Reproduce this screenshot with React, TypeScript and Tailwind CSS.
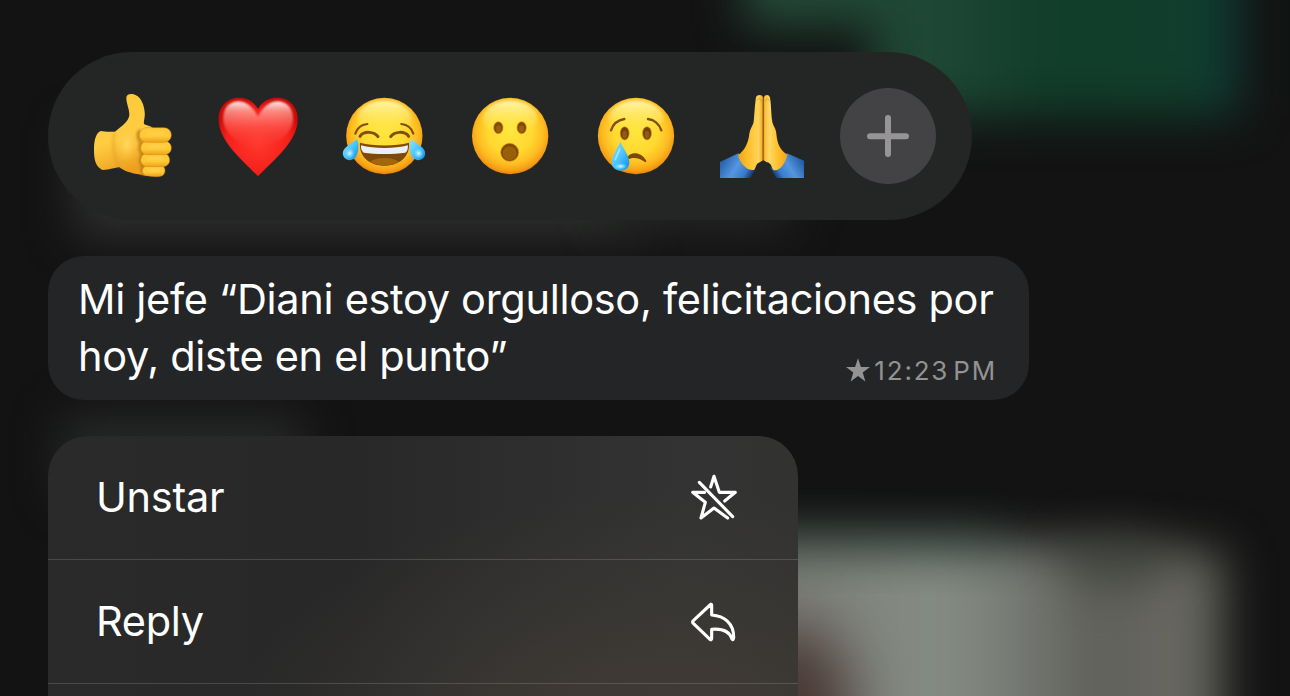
import React from "react";

function Backdrop() {
  return (
    <svg className="absolute inset-0 h-full w-full" viewBox="0 0 1290 696" preserveAspectRatio="none" aria-hidden="true">
      <defs>
        <filter id="soft" x="-50%" y="-100%" width="200%" height="300%" colorInterpolationFilters="sRGB">
          <feGaussianBlur stdDeviation="23" />
        </filter>
        <filter id="softer" x="-50%" y="-100%" width="200%" height="300%" colorInterpolationFilters="sRGB">
          <feGaussianBlur stdDeviation="30" />
        </filter>
        <linearGradient id="green" x1="740" x2="1250" y1="0" y2="0" gradientUnits="userSpaceOnUse">
          <stop offset="0" stopColor="#264c3b" />
          <stop offset="0.42" stopColor="#1d4634" />
          <stop offset="0.6" stopColor="#113d2a" />
          <stop offset="0.85" stopColor="#113e2c" />
          <stop offset="1" stopColor="#0e3a35" />
        </linearGradient>
        <linearGradient id="photo" x1="780" x2="1245" y1="0" y2="0" gradientUnits="userSpaceOnUse">
          <stop offset="0" stopColor="#7c7e77" />
          <stop offset="0.35" stopColor="#858c84" />
          <stop offset="0.5" stopColor="#777b75" />
          <stop offset="0.67" stopColor="#60605b" />
          <stop offset="0.9" stopColor="#6a6962" />
          <stop offset="1" stopColor="#2c3a2e" />
        </linearGradient>
      </defs>
      <rect width="1290" height="696" fill="#131313" />
      <path d="M744 -90H1240V116H872V26H744Z" fill="url(#green)" filter="url(#soft)" />
      <rect x="75" y="130" width="560" height="106" fill="#2e302e" filter="url(#soft)" />
      <rect x="610" y="140" width="180" height="92" fill="#232523" filter="url(#soft)" />
      <rect x="62" y="417" width="240" height="80" fill="#272a28" filter="url(#soft)" />
      <path d="M660 540L1100 544L1226 552V860H660Z" fill="url(#photo)" filter="url(#soft)" />
      <rect x="640" y="525" width="360" height="34" fill="#35584b" opacity="0.35" filter="url(#soft)" />
      <ellipse cx="1115" cy="560" rx="55" ry="30" fill="#393e37" opacity="0.6" filter="url(#soft)" />
      <ellipse cx="790" cy="710" rx="62" ry="85" fill="#463430" opacity="0.95" filter="url(#softer)" />
    </svg>
  );
}

function FaceShading({ id }: { id: string }) {
  return (
    <defs>
      <radialGradient id={id + "-base"} cx="0.5" cy="0.44" r="0.575">
        <stop offset="0" stopColor="#ffe63c" />
        <stop offset="0.5" stopColor="#ffd930" />
        <stop offset="0.75" stopColor="#fdbd22" />
        <stop offset="0.9" stopColor="#f79e14" />
        <stop offset="1" stopColor="#e07a05" />
      </radialGradient>
      <linearGradient id={id + "-shine"} x1="0" x2="0" y1="0" y2="1">
        <stop offset="0" stopColor="#fff8b4" stopOpacity="0.95" />
        <stop offset="1" stopColor="#ffe53b" stopOpacity="0" />
      </linearGradient>
      <linearGradient id={id + "-tear"} x1="0" x2="1" y1="0" y2="1">
        <stop offset="0" stopColor="#8fe3ff" />
        <stop offset="0.5" stopColor="#4cc4fc" />
        <stop offset="1" stopColor="#0a8be8" />
      </linearGradient>
      <radialGradient id={id + "-glow"}>
        <stop offset="0" stopColor="#d8f8ff" />
        <stop offset="1" stopColor="#8ee4ff" stopOpacity="0" />
      </radialGradient>
      <filter id={id + "-blur"} colorInterpolationFilters="sRGB">
        <feGaussianBlur stdDeviation="4" />
      </filter>
    </defs>
  );
}

function Head({ id, cx }: { id: string; cx: number }) {
  return (
    <>
      <FaceShading id={id} />
      <circle cx={cx} cy="168" r="114.5" fill={`url(#${id}-base)`} />
      <ellipse cx={cx} cy="116" rx="82" ry="54" fill={`url(#${id}-shine)`} filter={`url(#${id}-blur)`} />
    </>
  );
}

const emojiClass = "h-[110px] w-[110px] shrink-0";

function ThumbsUp() {
  return (
    <svg className={emojiClass} viewBox="0 0 330 330">
      <defs>
        <linearGradient id="hand" x1="0" x2="0.3" y1="0" y2="1">
          <stop offset="0" stopColor="#ffc936" />
          <stop offset="0.6" stopColor="#ffcc42" />
          <stop offset="1" stopColor="#eda01f" />
        </linearGradient>
        <linearGradient id="finger" x1="0" x2="0" y1="0" y2="1">
          <stop offset="0" stopColor="#ffca38" />
          <stop offset="0.6" stopColor="#ffc935" />
          <stop offset="1" stopColor="#eda31c" />
        </linearGradient>
        <radialGradient id="palm">
          <stop offset="0" stopColor="#ffd864" />
          <stop offset="1" stopColor="#ffcc42" stopOpacity="0" />
        </radialGradient>
        <filter id="handBlur" x="-50%" y="-50%" width="200%" height="200%" colorInterpolationFilters="sRGB">
          <feGaussianBlur stdDeviation="4" />
        </filter>
      </defs>
      <path d="M62 153C75 156 92 155 105 155C124 140 145 126 148 106C149 89 139 71 139 54C139 43 149 40 161 43C181 48 191 70 194 95C196 116 189 125 193 133C199 137 211 138 218 143L230 284C212 290 197 288 183 284C151 280 131 272 117 261C105 264 91 268 67 270C48 260 42 242 42 211C42 179 48 159 62 153Z" fill="url(#hand)" />
      <path d="M104 157C96 187 98 225 118 263" fill="none" stroke="#dd9827" strokeWidth="7" opacity="0.55" filter="url(#handBlur)" />
      <ellipse cx="141" cy="193" rx="35" ry="52" fill="url(#palm)" />
      <path d="M181 151C169 164 177 181 185 188C177 200 181 216 188 222C180 233 180 249 189 257C184 268 186 279 194 284" fill="none" stroke="#ac6b0c" strokeWidth="9" opacity="0.8" filter="url(#handBlur)" />
      <g stroke="#cb8718" strokeWidth="1.5">
        <path d="M202 256H243C257 259 259 279 247 287C234 292 210 290 196 286C182 278 184 263 202 256Z" fill="url(#finger)" />
        <rect x="182" y="220" width="87" height="40" rx="20" fill="url(#finger)" />
        <rect x="182" y="183" width="92" height="41" rx="20" fill="url(#finger)" />
        <rect x="178" y="143" width="96" height="44" rx="22" fill="url(#finger)" />
      </g>
      <path d="M205 161H252M208 199H253M206 235H249M207 270H240" fill="none" stroke="#ffda68" strokeWidth="7" strokeLinecap="round" opacity="0.7" filter="url(#handBlur)" />
    </svg>
  );
}

function Heart() {
  return (
    <svg className={emojiClass} viewBox="0 0 330 330">
      <defs>
        <radialGradient id="heart" cx="0.5" cy="0.56" r="0.56">
          <stop offset="0" stopColor="#ff3a2e" />
          <stop offset="0.7" stopColor="#f5201a" />
          <stop offset="1" stopColor="#cc0a08" />
        </radialGradient>
        <linearGradient id="heartShine" x1="0" x2="0" y1="0" y2="1">
          <stop offset="0" stopColor="#fff3ee" stopOpacity="0.97" />
          <stop offset="0.2" stopColor="#ffaea5" stopOpacity="0.75" />
          <stop offset="0.5" stopColor="#ff655b" stopOpacity="0.6" />
          <stop offset="1" stopColor="#fc342b" stopOpacity="0" />
        </linearGradient>
        <filter id="heartBlur" colorInterpolationFilters="sRGB"><feGaussianBlur stdDeviation="2.5" /></filter>
      </defs>
      <path d="M159 289C110 238 42 184 41 120C40 73 74 52 104 53C132 54 149 69 159 87C169 69 186 54 214 53C246 52 279 74 278 120C277 184 207 239 159 289Z" fill="url(#heart)" />
      <path d="M159 110C145 82 126 64 98 64C67 66 53 91 55 119C57 157 97 192 159 216C224 190 262 157 264 119C266 91 251 66 220 64C192 64 173 82 159 110Z" fill="url(#heartShine)" filter="url(#heartBlur)" />
    </svg>
  );
}

function Joy() {
  return (
    <svg className={emojiClass} viewBox="0 0 330 330">
      <Head id="joy" cx={163} />
      <g fill="none" stroke="#80510b" strokeLinecap="round">
        <path d="M76 161C81 144 94 134 112 132M214 132C232 134 245 144 250 161" strokeWidth="6.5" />
        <path d="M90 169C102 152 132 154 144 170M182 170C194 154 224 152 236 169" strokeWidth="9" />
      </g>
      <path d="M90 188C129 199 198 199 237 188C241 232 205 257 163 257C122 257 86 232 90 188Z" fill="#7f4a03" />
      <path d="M93 196C133 207 194 207 234 196C234 208 231 216 226 218C191 223 135 223 101 218C95 213 92 206 93 196Z" fill="#eceff6" />
      <path d="M120 246C139 230 188 230 207 246C190 259 138 259 120 246Z" fill="#a2670c" />
      <path d="M81 178C89 196 86 222 74 235C62 245 43 241 39 225C35 207 53 197 81 178Z" fill="url(#joy-tear)" />
      <path d="M243 178C235 196 238 222 250 235C262 245 281 241 285 225C289 207 271 197 243 178Z" fill="url(#joy-tear)" />
      <ellipse cx="59" cy="220" rx="15" ry="16" fill="url(#joy-glow)" />
      <ellipse cx="266" cy="220" rx="15" ry="16" fill="url(#joy-glow)" />
    </svg>
  );
}

function Surprised() {
  return (
    <svg className={emojiClass} viewBox="0 0 330 330">
      <Head id="wow" cx={165.5} />
      <g fill="#7e4904" stroke="#dc960d" strokeWidth="2">
        <ellipse cx="130" cy="143" rx="14" ry="18" />
        <ellipse cx="200" cy="143" rx="14" ry="18" />
        <circle cx="164" cy="217" r="27" />
      </g>
      <g fill="#9a6009">
        <ellipse cx="131" cy="147" rx="8" ry="11" />
        <ellipse cx="199" cy="147" rx="8" ry="11" />
        <circle cx="164" cy="220" r="21" />
      </g>
    </svg>
  );
}

function Crying() {
  return (
    <svg className={emojiClass} viewBox="0 0 330 330">
      <Head id="cry" cx={168} />
      <path d="M93 151C99 133 114 120 133 117M204 117C223 119 238 133 244 151" fill="none" stroke="#80500c" strokeWidth="7" strokeLinecap="round" />
      <g fill="#744204" stroke="#dfa11b" strokeWidth="2">
        <ellipse cx="134" cy="160" rx="13.5" ry="20" />
        <ellipse cx="201" cy="160" rx="13.5" ry="20" />
      </g>
      <g fill="#905b0e">
        <ellipse cx="134" cy="164" rx="7" ry="12" />
        <ellipse cx="201" cy="164" rx="7" ry="12" />
      </g>
      <path d="M142 232C153 213 184 216 198 241C201 248 196 248 190 243C175 232 157 232 146 238Z" fill="#794807" />
      <path d="M121 184C128 205 148 226 148 247C148 263 137 272 122 272C106 272 95 262 95 247C95 226 114 205 121 184Z" fill="url(#cry-tear)" />
      <ellipse cx="122" cy="259" rx="20" ry="10" fill="url(#cry-glow)" />
      <path d="M119 207C116 219 108 229 106 239" fill="none" stroke="#baf0ff" strokeWidth="5" strokeLinecap="round" opacity="0.7" />
    </svg>
  );
}

function Praying() {
  return (
    <svg className={emojiClass} viewBox="0 0 330 330">
      <defs>
        <linearGradient id="prayLeft" x1="100" x2="176" y1="0" y2="0" gradientUnits="userSpaceOnUse">
          <stop offset="0" stopColor="#f0a51a" />
          <stop offset="0.4" stopColor="#ffc02c" />
          <stop offset="0.8" stopColor="#ffd458" />
          <stop offset="0.92" stopColor="#f3b434" />
          <stop offset="1" stopColor="#a8660b" />
        </linearGradient>
        <linearGradient id="prayRight" x1="247" x2="175" y1="0" y2="0" gradientUnits="userSpaceOnUse">
          <stop offset="0" stopColor="#f0a51a" />
          <stop offset="0.4" stopColor="#ffc02c" />
          <stop offset="0.75" stopColor="#ffd864" />
          <stop offset="0.94" stopColor="#f9be3c" />
          <stop offset="1" stopColor="#c98213" />
        </linearGradient>
        <linearGradient id="sleeveLeft" x1="60" x2="150" y1="235" y2="290" gradientUnits="userSpaceOnUse">
          <stop offset="0" stopColor="#2a66b3" />
          <stop offset="0.4" stopColor="#5596e0" />
          <stop offset="0.7" stopColor="#3b7cc9" />
          <stop offset="1" stopColor="#06163c" />
        </linearGradient>
        <linearGradient id="sleeveRight" x1="285" x2="198" y1="235" y2="290" gradientUnits="userSpaceOnUse">
          <stop offset="0" stopColor="#2460a8" />
          <stop offset="0.4" stopColor="#5596e0" />
          <stop offset="0.7" stopColor="#3b7cc9" />
          <stop offset="1" stopColor="#06163c" />
        </linearGradient>
      </defs>
      <path d="M45 246L100 220L153 263L137 294H45Z" fill="url(#sleeveLeft)" />
      <path d="M297 242L246 220L195 263L214 294H297Z" fill="url(#sleeveRight)" />
      <path d="M153 52C156 42 174 42 175 54L176 238C175 243 162 247 156 252L148 269C126 277 103 245 99 226C120 210 130 189 133 161C136 144 143 139 146 126C149 97 150 69 153 52Z" fill="url(#prayLeft)" />
      <path d="M176 54C178 42 194 42 195 54C199 73 198 101 202 126C205 139 213 145 214 161C217 191 224 208 247 224C242 248 225 273 208 271C201 269 202 258 195 251C189 246 176 246 175 238Z" fill="url(#prayRight)" />
      <path d="M175 60L174 238" stroke="#a35c0c" strokeWidth="2.5" />
      <path d="M156 61C159 53 168 55 169 65M181 65C182 54 191 54 192 62" fill="none" stroke="#e59c24" strokeWidth="3" />
    </svg>
  );
}

function UnstarIcon() {
  return (
    <svg className="relative -top-0.5 left-0.5 h-[50px] w-[50px]" viewBox="0 0 150 150" fill="none" stroke="#fff" strokeWidth="9.4" strokeLinecap="round" strokeLinejoin="round">
      <path d="M62 48L72 16L88 64H136L104 90" />
      <path d="M44 64H8L46 94L33 141L72 111L113 141" />
      <path d="M28 34L128 137" />
    </svg>
  );
}

function ReplyIcon() {
  return (
    <svg className="relative left-0.5 h-[50px] w-[50px]" viewBox="0 0 150 150" fill="none" stroke="#fff" strokeWidth="9.4" strokeLinecap="round" strokeLinejoin="round">
      <path d="M64 22Q62 21 60 24L10 71Q6 75 10 79L60 127Q65 130 65 124V97C99 94 119 104 126 126Q130 131 131 122C132 79 103 57 65 54V25Q65 22 62 22" />
    </svg>
  );
}

function MenuRow({ label, children }: { label: string; children: React.ReactNode }) {
  return (
    <div className="flex h-[124px] shrink-0 items-center justify-between border-b border-white/15 pr-[60px] pl-12">
      <span className="pb-0.5 text-[41.5px] leading-[56px] tracking-[-0.3px]">{label}</span>
      {children}
    </div>
  );
}

export default function App() {
  return (
    <main className="relative h-[696px] w-[1290px] overflow-hidden bg-[#131313] font-['Inter',sans-serif] text-white">
      <Backdrop />
      <div className="relative flex h-full flex-col items-start pt-[52px] pl-12">
        <section className="flex h-[168px] w-[924px] shrink-0 items-start gap-[15px] rounded-full bg-[#242625] pt-7 pl-8">
          <ThumbsUp />
          <Heart />
          <Joy />
          <Surprised />
          <Crying />
          <Praying />
          <button className="mt-2 ml-2.5 flex h-24 w-24 shrink-0 items-center justify-center rounded-full bg-[#434345]" aria-label="More reactions">
            <svg className="h-12 w-12" viewBox="0 0 48 48" fill="none" stroke="#969496" strokeWidth="6" strokeLinecap="round">
              <path d="M24 6V42M6 24.3H42" />
            </svg>
          </button>
        </section>

        <section className="mt-9 flex h-36 w-[981px] shrink-0 items-end justify-between rounded-[36px] bg-[#242527] pr-[32px] pl-[30px]">
          <p className="w-0 self-start pt-[15px] text-[41.5px] leading-[57px] tracking-[-0.31px] whitespace-nowrap">
            Mi jefe “Diani estoy orgulloso, felicitaciones por
            <br />
            hoy, diste en el punto”
          </p>
          <div className="flex items-center pb-[13px] text-[#929392]">
            <svg className="relative -top-px h-6 w-6" viewBox="0 0 24 24" fill="currentColor">
              <path d="M12 .3L14.9 8.9L24 9L16.7 14.4L19.4 23.5L12 18.1L4.6 23.5L7.3 14.4L0 9L9.1 8.9Z" />
            </svg>
            <span className="ml-1 text-[26px] leading-8 tracking-[1.8px] [word-spacing:-5px]">12:23 PM</span>
          </div>
        </section>

        <section className="mt-9 flex h-[300px] w-[750px] shrink-0 flex-col overflow-hidden rounded-t-[40px] bg-[#292929] bg-[radial-gradient(ellipse_420px_260px_at_80%_105%,rgba(72,62,54,0.82),rgba(66,61,56,0.45)_55%,transparent),linear-gradient(90deg,#292a29_0%,#282828_40%,#323332_85%,#323231_100%)]">
          <MenuRow label="Unstar"><UnstarIcon /></MenuRow>
          <MenuRow label="Reply"><ReplyIcon /></MenuRow>
        </section>
      </div>
    </main>
  );
}
